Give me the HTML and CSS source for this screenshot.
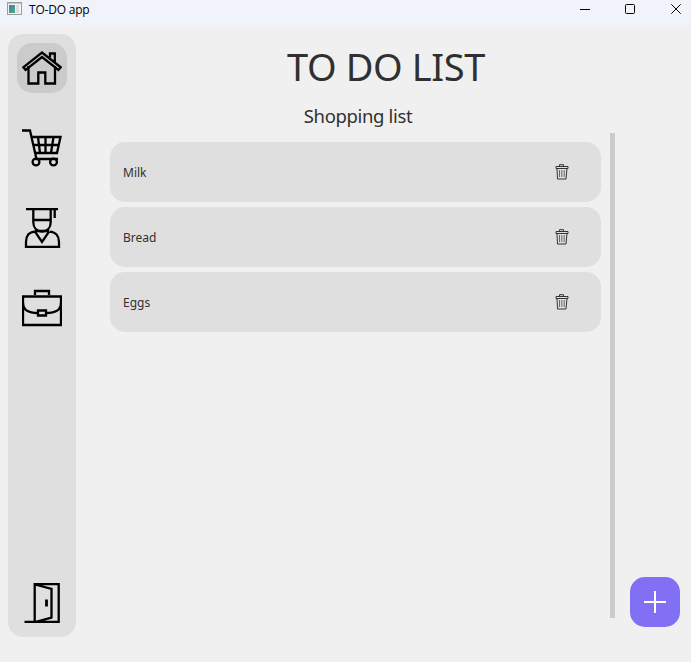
FILE: index.html
```html
<!DOCTYPE html>
<html lang="en">
<head>
<meta charset="utf-8">
<title>TO-DO app</title>
<link rel="stylesheet" href="styles.css">
</head>
<body>
<header class="titlebar">
  <svg class="app-icon" width="16" height="14" viewBox="0 0 16 14">
    <defs><linearGradient id="pane" x1="0" y1="0" x2="1" y2="1"><stop offset="0" stop-color="#4678a8"/><stop offset="1" stop-color="#4fae7c"/></linearGradient></defs>
    <rect x=".5" y=".5" width="14" height="12" fill="#f3f3f3" stroke="#9a9da3"/>
    <path d="M1 1.5h13" stroke="#c3c7cc"/>
    <rect x="2" y="3" width="6" height="8" fill="url(#pane)"/>
    <rect x="9" y="3" width="3" height="8" fill="#dedede"/>
  </svg>
  <span class="app-name">TO-DO app</span>
  <div class="controls">
    <svg width="10" height="10" viewBox="0 0 10 10"><path d="M0 5.5h10"/></svg>
    <svg width="10" height="10" viewBox="0 0 10 10"><rect x=".5" y=".5" width="9" height="9" rx="1"/></svg>
    <svg class="close" width="10" height="10" viewBox="0 0 10 10"><path d="M.3.3l9.4 9.4M9.7.3L.3 9.7"/></svg>
  </div>
</header>
<div class="workspace">
  <nav class="sidebar">
    <a class="nav-item active"><svg width="40" height="40" viewBox="0 0 40 40"><path d="M6.500 18v17.500h9.800V24.500h7v11H33V18"/><path d="M1.300 19.300L20 4.500 38.700 19.300 36.400 22 20 9 3.600 22z"/><path d="M28 9.500V5.500h4.800v8.500"/></svg></a>
    <a class="nav-item"><svg width="40" height="40" viewBox="0 0 40 40"><path d="M0 2.500h8L14.500 31H36"/><path d="M10 9H38.500L35 25H13.500M12 17H37M16 9l2 16M23.500 9v16M31.500 9L29 25"/><circle cx="14" cy="34" r="3.400"/><circle cx="31.500" cy="34" r="3.400"/></svg></a>
    <a class="nav-item"><svg width="40" height="40" viewBox="0 0 40 40"><path d="M4 1h32M11.300 1v13c0 6 3.500 9.500 8.700 9.500s8.700-3.500 8.700-9.500V1M11.300 12h17.400M32.700 1v9"/><path d="M13 23.600C7 23.700 4 28 4 34v5h33v-5c0-6-3.500-10.300-9.500-10.400M13 23h14M13 23.600L20 34l7-10.400"/></svg></a>
    <a class="nav-item"><svg width="40" height="40" viewBox="0 0 40 40"><path d="M13 7V3h14v4M1 8.500h38V37H1z"/><path d="M1 15c0 7 5 10 14.500 10M39 15c0 7-5 10-14.500 10M16 22.500h8v5h-8z"/></svg></a>
    <a class="nav-item exit"><svg width="40" height="40" viewBox="0 0 40 40"><path d="M2.500 39H12.700V1h24v38H13L29.500 34.500V6L13 1.500"/><path d="M24.500 16.500v7" stroke-width="2.800"/></svg></a>
  </nav>
  <main class="content">
    <h1>TO DO LIST</h1>
    <h2>Shopping list</h2>
    <div class="list-area">
      <ul class="tasks">
        <li><span>Milk</span><svg class="trash" width="14" height="16" viewBox="0 0 14 16"><path d="M4.500 2V.700h4V2M1 2.500h12v2H1zM2 4.500l.5 10.500h8.500L12 4.500"/><path class="slats" d="M4.500 6v7M6.800 6v7M9.200 6v7"/></svg></li>
        <li><span>Bread</span><svg class="trash" width="14" height="16" viewBox="0 0 14 16"><path d="M4.500 2V.700h4V2M1 2.500h12v2H1zM2 4.500l.5 10.500h8.500L12 4.500"/><path class="slats" d="M4.500 6v7M6.800 6v7M9.200 6v7"/></svg></li>
        <li><span>Eggs</span><svg class="trash" width="14" height="16" viewBox="0 0 14 16"><path d="M4.500 2V.700h4V2M1 2.500h12v2H1zM2 4.500l.5 10.500h8.500L12 4.500"/><path class="slats" d="M4.500 6v7M6.800 6v7M9.200 6v7"/></svg></li>
      </ul>
      <div class="scrollbar"></div>
    </div>
  </main>
  <button class="add" aria-label="Add"><svg width="22" height="22" viewBox="0 0 22 22"><path d="M11 0v22M0 11h22"/></svg></button>
</div>
</body>
</html>
```
FILE: styles.css
```css
* { box-sizing: border-box; }
body {
  margin: 0;
  height: 662px;
  display: flex;
  flex-direction: column;
  overflow: hidden;
  background: #f0f0f0;
  color: #303030;
  font-family: "Noto Sans", sans-serif;
}
svg { display: block; fill: none; stroke: #000; }
.titlebar {
  height: 25px;
  flex: none;
  display: flex;
  align-items: flex-start;
  padding: 2px 10px 0 7px;
  background: #f0f3fa;
}
.app-icon { stroke: none; }
.app-name {
  margin-left: 6px;
  color: #000;
  font: 12px/16px "Open Sans", sans-serif;
  letter-spacing: -0.2px;
}
.controls { display: flex; gap: 35px; margin: 2px 0 0 auto; }
.close { margin-left: 1px; }
.workspace {
  flex: 1;
  display: flex;
  padding: 9px 11px 25px 8px;
}
.sidebar {
  width: 68px;
  flex: none;
  display: flex;
  flex-direction: column;
  align-items: center;
  gap: 30px;
  padding: 9px;
  border-radius: 15px;
  background: #dfdfdf;
}
.nav-item {
  width: 50px;
  height: 50px;
  display: grid;
  place-items: center;
  border-radius: 15px;
}
.nav-item svg { stroke-width: 2.300; }
.active { background: #cbcbcb; }
.exit { margin-top: auto; }
.content { width: 505px; flex: none; margin-left: 34px; height: 584px; }
h1, h2 { margin: 0; font-weight: 400; text-align: center; }
h1 {
  width: 552px;
  height: 67px;
  font-size: 38px;
  line-height: 65px;
  letter-spacing: -0.4px;
}
h2 {
  width: 496px;
  height: 32px;
  font-size: 18.5px;
  line-height: 29px;
  letter-spacing: -0.35px;
}
.list-area { display: flex; height: 485px; gap: 9px; }
.tasks {
  width: 491px;
  margin: 0;
  padding: 9px 0 0;
  list-style: none;
}
.tasks li {
  height: 60px;
  margin-bottom: 5px;
  padding: 0 32px 0 13px;
  display: flex;
  align-items: center;
  justify-content: space-between;
  border-radius: 15px;
  background: #dfdfdf;
  font-size: 12px;
}
.trash { stroke: #333; }
.slats { stroke: #666; }
.scrollbar { width: 5px; background: #cbcbcb; }
.add {
  width: 50px;
  height: 50px;
  flex: none;
  margin: auto 0 10px auto;
  padding: 0;
  border: 0;
  display: grid;
  place-items: center;
  border-radius: 15px;
  background: #8270f4;
}
.add svg { stroke: #fff; stroke-width: 2; }
```
